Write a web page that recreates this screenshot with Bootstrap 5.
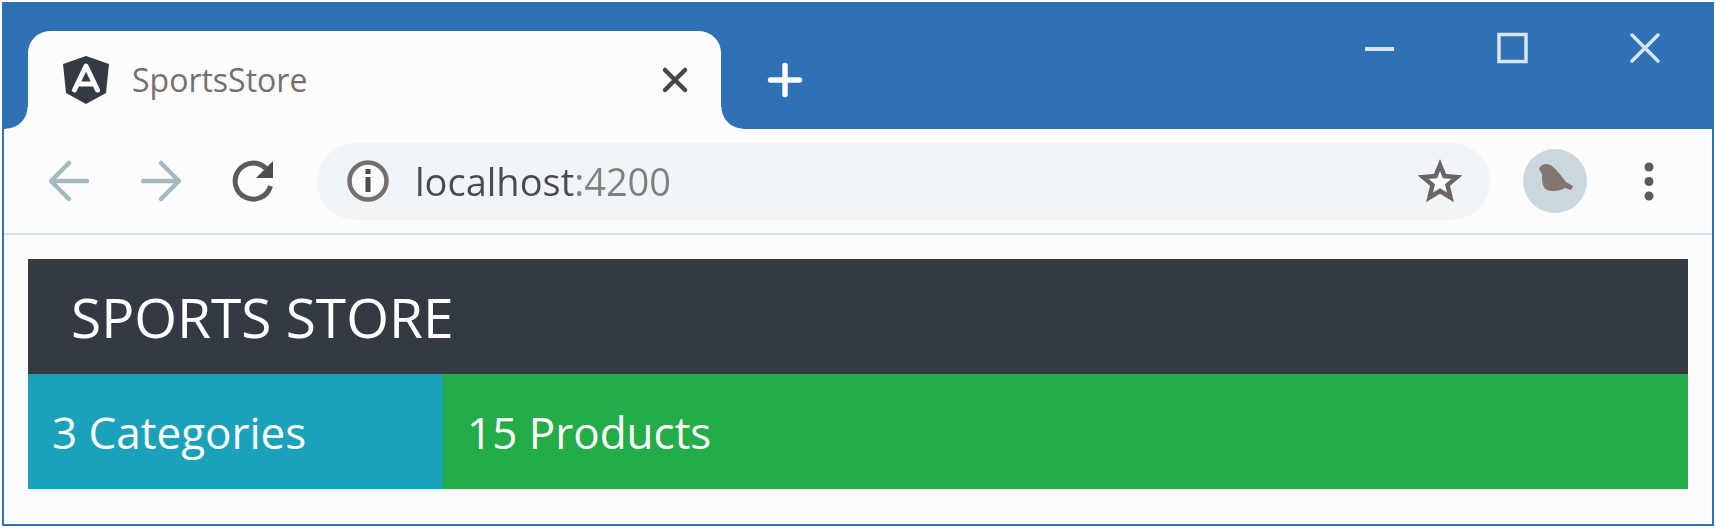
<!DOCTYPE html>
<html lang="en">
<head>
<meta charset="utf-8">
<meta name="viewport" content="width=device-width, initial-scale=1">
<title>SportsStore</title>
<link href="https://cdn.jsdelivr.net/npm/bootstrap@5.3.0/dist/css/bootstrap.min.css" rel="stylesheet">
<style>
  :root { --frame: #2f71b5; --paper: #fcfcfc; --ink: #75706f; --dark: #343a42; --pale: #d4e0e6; }
  body { font-family: "Open Sans", "Noto Sans", sans-serif; background: #fff; padding: 2px; }
  .browser { border: 2px solid var(--frame); background: var(--paper); }
  .icon-btn { border: 0; padding: 0; background: none; line-height: 0; flex: none; }
  .icon-btn svg, .tab-logo { display: block; }
  .titlebar { background: var(--frame); height: 125px; padding: 27px 51px 0 24px; }
  .tab { position: relative; flex: 0 1 693px; height: 98px; background: var(--paper);
         border-radius: 22px 22px 0 0; padding: 0 32px 0 34px; color: var(--ink); font-size: 32px; line-height: 40px; }
  .tab::before, .tab::after { content: ""; position: absolute; bottom: 0; width: 22px; height: 22px; }
  .tab::before { right: 100%; background: radial-gradient(circle at 0 0, var(--frame) 21px, var(--paper) 22px); }
  .tab::after { left: 100%; background: radial-gradient(circle at 100% 0, var(--frame) 21px, var(--paper) 22px); }
  .tab-logo { margin-right: 22px; }
  .new-tab { margin: 31px 0 0 46px; }
  .win-controls { gap: 101px; margin-top: 1px; }
  .toolbar { height: 106px; padding: 0 51px 0 43px; border-bottom: 2px solid var(--pale); }
  .nav-buttons { gap: 48px; margin-right: 42px; }
  .omnibox { height: 77px; border-radius: 39px; background: #f1f5f7; padding: 0 28px; }
  .address { border: 0; padding: 0; outline: 0; min-width: 0; margin-left: 24px; font-size: 38px; line-height: 48px;
             color: transparent; background: linear-gradient(90deg, #4b4a4d 160px, #80807f 160px);
             -webkit-background-clip: text; background-clip: text; }
  .avatar { width: 64px; height: 64px; border-radius: 50%; background: #cad8de; margin: 0 50px 0 33px; }
  .viewport-pad { padding: 24px; padding-bottom: 35px; }
  .store-head { background: var(--dark); height: 115px; padding: 0 43px; font-size: 55px; line-height: 72px; }
  .store-cell { height: 115px; padding: 0 24px; font-size: 44px; line-height: 60px; }
  .cell-info { background: #1ba2ba; }
  .cell-success { background: #23ac47; }
</style>
</head>
<body>
<div class="browser">
  <header class="titlebar d-flex align-items-start">
    <div class="tab d-flex align-items-center">
      <svg class="tab-logo flex-shrink-0" width="48" height="48" viewBox="0 0 48 48" aria-hidden="true">
        <path fill="#343a42" d="M24 0 47 8 44 37 24 48 4 37 1 8Z"/>
        <path fill="none" stroke="#fcfcfc" stroke-width="5" stroke-linecap="round" stroke-linejoin="round" d="M12.500 34 24 10 35.500 34M18 28H30"/>
      </svg>
      <span class="flex-grow-1">SportsStore</span>
      <button class="icon-btn" type="button" aria-label="Close tab">
        <svg width="28" height="28" viewBox="0 0 28 28"><path fill="none" stroke="#47474b" stroke-width="4.500" stroke-linecap="round" d="M4 4 24 24M24 4 4 24"/></svg>
      </button>
    </div>
    <button class="icon-btn new-tab" type="button" aria-label="New tab">
      <svg width="36" height="36" viewBox="0 0 36 36"><path fill="none" stroke="#fcfcfc" stroke-width="5.500" stroke-linecap="round" d="M18 3.500V32.500M3.500 18H32.500"/></svg>
    </button>
    <div class="win-controls d-flex ms-auto">
      <button class="icon-btn" type="button" aria-label="Minimize">
        <svg width="32" height="32" viewBox="0 0 32 32"><path stroke="#d9e5ed" stroke-width="4" d="M2 17H31"/></svg>
      </button>
      <button class="icon-btn" type="button" aria-label="Maximize">
        <svg width="32" height="32" viewBox="0 0 32 32"><path fill="none" stroke="#d9e5ed" stroke-width="3.500" d="M3 2.500H30V29.500H3Z"/></svg>
      </button>
      <button class="icon-btn" type="button" aria-label="Close">
        <svg width="32" height="32" viewBox="0 0 32 32"><path fill="none" stroke="#d9e5ed" stroke-width="3.500" stroke-linecap="round" d="M3 3 29 29M29 3 3 29"/></svg>
      </button>
    </div>
  </header>

  <nav class="toolbar d-flex align-items-center" aria-label="Browser toolbar">
    <div class="nav-buttons d-flex">
      <button class="icon-btn" type="button" aria-label="Back">
        <svg width="44" height="44" viewBox="0 0 44 44"><path fill="none" stroke="#a3bac2" stroke-width="4.500" stroke-linecap="round" stroke-linejoin="round" d="M40 22H5M22 4 4 22 22 40"/></svg>
      </button>
      <button class="icon-btn" type="button" aria-label="Forward">
        <svg width="44" height="44" viewBox="0 0 44 44"><path fill="none" stroke="#a3bac2" stroke-width="4.500" stroke-linecap="round" stroke-linejoin="round" d="M4 22H39M22 4 40 22 22 40"/></svg>
      </button>
      <button class="icon-btn" type="button" aria-label="Reload">
        <svg width="44" height="44" viewBox="0 0 44 44"><path fill="none" stroke="#5e5a5b" stroke-width="5" d="M39.500 27A18 18 0 1 1 35 9.500"/><path fill="#4e4c4f" d="M42 2V19H25Z"/></svg>
      </button>
    </div>
    <div class="omnibox d-flex align-items-center flex-grow-1">
      <button class="icon-btn" type="button" aria-label="Site information">
        <svg width="46" height="46" viewBox="0 0 46 46"><circle cx="23" cy="23" r="18.500" fill="#fafbfc" stroke="#75706f" stroke-width="4.500"/><path stroke="#4b4a4d" stroke-width="5" d="M23 11V16M23 19V34"/></svg>
      </button>
      <input class="address flex-grow-1" type="text" value="localhost:4200" aria-label="Address">
      <button class="icon-btn" type="button" aria-label="Bookmark this page">
        <svg width="44" height="44" viewBox="0 0 44 44"><path fill="#fafbfc" stroke="#6b6666" stroke-width="4.500" d="M22 6 26.500 17 39 18 29.500 26 32.500 38.500 22 32 11.500 38.500 14.500 26 5 18 17.500 17Z"/></svg>
      </button>
    </div>
    <button class="icon-btn avatar d-flex align-items-center justify-content-center" type="button" aria-label="Profile">
      <svg width="64" height="64" viewBox="0 0 64 64"><path fill="#827471" d="M16 20C18 14 25 14 29 17 35 22 39 28 43 33L50 37 48 41 42 39C37 42 29 43 24 41 19 38 19 32 19 25Z"/></svg>
    </button>
    <button class="icon-btn" type="button" aria-label="Menu">
      <svg width="24" height="44" viewBox="0 0 24 44"><g fill="#5e5a5b"><circle cx="12" cy="8" r="4.500"/><circle cx="12" cy="22.500" r="4.500"/><circle cx="12" cy="37" r="4.500"/></g></svg>
    </button>
  </nav>

  <main class="viewport-pad">
    <div class="container-fluid p-0 text-white">
      <div class="store-head d-flex align-items-center">SPORTS STORE</div>
      <div class="row g-0">
        <div class="col-3 store-cell cell-info d-flex align-items-center">3 Categories</div>
        <div class="col-9 store-cell cell-success d-flex align-items-center">15 Products</div>
      </div>
    </div>
  </main>
</div>
<script src="https://cdn.jsdelivr.net/npm/bootstrap@5.3.0/dist/js/bootstrap.bundle.min.js"></script>
</body>
</html>
